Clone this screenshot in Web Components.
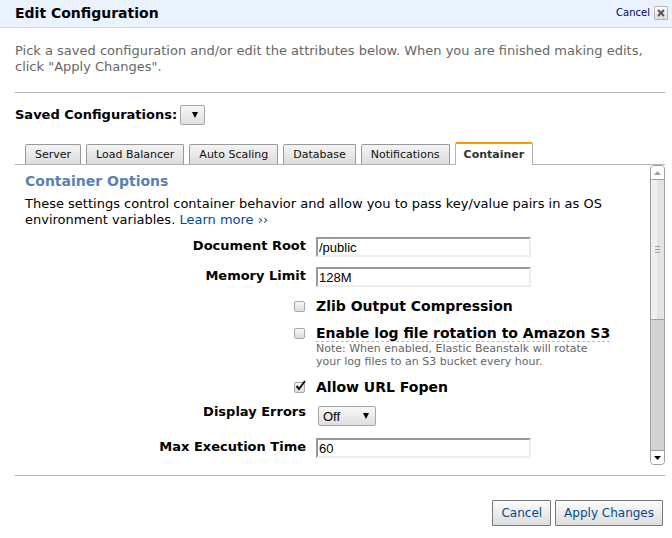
<!DOCTYPE html>
<html lang="en">
<head>
<meta charset="utf-8">
<title>Edit Configuration</title>
<style>
  body { margin: 0; background: #fff; color: #000; font: 13px/16px "DejaVu Sans", sans-serif; }
</style>
</head>
<body>
<config-dialog heading="Edit Configuration">
  <p slot="intro">Pick a saved configuration and/or edit the attributes below. When you are finished making edits, click "Apply Changes".</p>
  <saved-select slot="saved"></saved-select>
  <tab-bar slot="tabs" tabs="Server|Load Balancer|Auto Scaling|Database|Notifications|Container" active="Container"></tab-bar>
  <scroll-pane slot="pane">
    <options-intro></options-intro>
    <text-field label="Document Root" value="/public"></text-field>
    <text-field label="Memory Limit" value="128M"></text-field>
    <check-field label="Zlib Output Compression"></check-field>
    <check-field label="Enable log file rotation to Amazon S3" hint>Note: When enabled, Elastic Beanstalk will rotate your log files to an S3 bucket every hour.</check-field>
    <check-field label="Allow URL Fopen" checked></check-field>
    <select-field label="Display Errors" value="Off"></select-field>
    <text-field label="Max Execution Time" value="60"></text-field>
  </scroll-pane>
  <action-button slot="actions">Cancel</action-button>
  <action-button slot="actions">Apply Changes</action-button>
</config-dialog>

<script>
const define = (name, render) => customElements.define(name, class extends HTMLElement {
  connectedCallback() {
    if (this.shadowRoot) return;
    this.attachShadow({ mode: "open" }).innerHTML = render(this);
  }
});

const row = `
  :host { display: grid; grid-template-columns: 281px 1fr; column-gap: 10px; }
  .name { text-align: right; font-weight: bold; padding-top: 1px; }
  * { box-sizing: border-box; }`;

const select = `
  .pick { position: relative; display: block; width: fit-content; }
  select { appearance: none; display: block; height: 20px; margin: 0; padding: 0 4px; border: 1px solid #a6a6a6;
    border-radius: 2px; background: linear-gradient(#f8f8f8, #dedede); color: #000;
    font: 13px "Liberation Sans", sans-serif; }
  .pick svg { position: absolute; right: 7px; top: 7px; pointer-events: none; }`;
const arrow = `<svg width="6" height="6"><path d="M0 0h6L3 6z"/></svg>`;

define("config-dialog", el => `
  <style>
    :host { display: block; }
    header { display: flex; justify-content: space-between; align-items: center; height: 28px; box-sizing: border-box;
      padding: 0 4px 2px 15px; background: #eaf2fe; border-bottom: 1px solid #c9dcea; }
    h1 { margin: 0; font-size: 14px; line-height: 16px; }
    .close { display: flex; align-items: center; gap: 4px; }
    .close a { font-size: 10px; line-height: 14px; color: #000066; text-decoration: none; }
    .close button { display: flex; align-items: center; justify-content: center; width: 14px; height: 14px; padding: 0;
      border: 1px solid #b4b4b4; border-radius: 1px; background: linear-gradient(#fff, #ddd); }
    main { padding: 15px 7px 0 15px; }
    ::slotted(p) { margin: 0; color: #666; }
    .saved { margin-top: 17px; padding-top: 12px; border-top: 1px solid #b3b3b3; }
    .tabs { margin-top: 17px; }
    footer { display: flex; justify-content: flex-end; gap: 4px; margin-top: 10px; padding: 24px 2px 12px 0;
      border-top: 1px solid #b3b3b3; }
  </style>
  <header>
    <h1>${el.getAttribute("heading")}</h1>
    <div class="close"><a href="#">Cancel</a><button aria-label="Close"><svg width="8" height="8"><path d="M1 1l6 6M7 1L1 7" stroke="#555" stroke-width="2"/></svg></button></div>
  </header>
  <main>
    <slot name="intro"></slot>
    <div class="saved"><slot name="saved"></slot></div>
    <div class="tabs"><slot name="tabs"></slot></div>
    <slot name="pane"></slot>
    <footer><slot name="actions"></slot></footer>
  </main>`);

define("saved-select", () => `
  <style>
    :host { display: flex; align-items: center; gap: 3px; }
    label { font-weight: bold; }
    ${select}
    select { width: 25px; }
  </style>
  <label for="s">Saved Configurations:</label>
  <span class="pick"><select id="s"></select>${arrow}</span>`);

define("tab-bar", el => `
  <style>
    :host { display: flex; align-items: flex-end; gap: 5px; padding: 0 10px; border-bottom: 1px solid #b3b3b3; }
    button { box-sizing: border-box; height: 20px; margin: 0; padding: 0 9px; border: 1px solid #999; border-bottom: 0;
      border-radius: 2px 2px 0 0; background: linear-gradient(#f4f4f4, #dcdcdc); color: #111;
      font: 11px/14px "DejaVu Sans", sans-serif; white-space: nowrap; }
    .on { height: 23px; margin-bottom: -1px; padding: 0 8px; border-color: #b3b3b3; border-top: 2px solid #f90; background: #fff;
      color: #333; font-weight: bold; }
  </style>
  ${el.getAttribute("tabs").split("|").map(t =>
    `<button${t === el.getAttribute("active") ? ' class="on"' : ""}>${t}</button>`).join("")}`);

define("scroll-pane", () => `
  <style>
    :host { display: grid; grid-template-columns: 1fr 15px; }
    .body { padding: 8px 10px 7px; }
    ::slotted(:last-child) { margin-bottom: 0 !important; }
    .bar { display: flex; flex-direction: column; box-sizing: border-box; border: 1px solid #a0a0a0; border-radius: 4px; background: #d2d2d2; overflow: hidden; }
    button { display: flex; align-items: center; justify-content: center; height: 14px; padding: 0; border: 0; background: #fff; }
    .up { border-bottom: 1px solid #a0a0a0; }
    .down { border-top: 1px solid #a0a0a0; }
    .track { flex: 1; }
    .thumb { display: flex; align-items: center; justify-content: center; box-sizing: border-box; height: 52%;
      border-bottom: 1px solid #a0a0a0; background: linear-gradient(90deg, #efefef 50%, #e3e3e3 50%); }
    svg { display: block; }
  </style>
  <div class="body"><slot></slot></div>
  <div class="bar">
    <button class="up" aria-label="Scroll up"><svg width="7" height="4"><path d="M3.500 0L7 4H0z" fill="#a0a0a0"/></svg></button>
    <div class="track"><div class="thumb"><svg width="5" height="7" shape-rendering="crispEdges"><path d="M0 .5h5M0 3.500h5M0 6.500h5" stroke="#a0a0a0"/></svg></div></div>
    <button class="down" aria-label="Scroll down"><svg width="7" height="4"><path d="M0 0h7L3.500 4z"/></svg></button>
  </div>`);

define("options-intro", () => `
  <style>
    :host { display: block; margin-bottom: 9px; }
    h2 { margin: 0 0 7px; font-size: 14px; line-height: 16px; color: #5a7fb2; }
    p { margin: 0; }
    a { color: #004b91; text-decoration: none; }
  </style>
  <h2>Container Options</h2>
  <p>These settings control container behavior and allow you to pass key/value pairs in as OS environment variables. <a href="#">Learn more ››</a></p>`);

define("text-field", el => `
  <style>
    ${row}
    :host { margin-bottom: 10px; }
    input { display: block; width: 215px; height: 20px; margin: 0; padding: 1px; border: 2px solid; border-color: #999 #eee #eee #999;
      background: #fff; color: #000; font: 13px "Liberation Sans", sans-serif; }
  </style>
  <label class="name" for="c">${el.getAttribute("label")}</label>
  <input id="c" value="${el.getAttribute("value")}">`);

define("check-field", el => `
  <style>
    ${row}
    :host { padding-top: 1px; margin-bottom: 10px; }
    .box { position: relative; justify-self: end; width: 11px; height: 11px; margin: 3px 1px 0 0; }
    input { appearance: none; display: block; width: 11px; height: 11px; margin: 0; border: 1px solid #a8a8a8; border-radius: 2px;
      background: linear-gradient(#f6f6f6, #dcdcdc); }
    svg { position: absolute; left: 1px; top: -2px; pointer-events: none; }
    .text { display: block; width: fit-content; font-size: 14px; line-height: 16px; font-weight: bold; }
    .hint { border-bottom: 1px dashed #bbb; }
    .note { max-width: 290px; font-size: 11px; line-height: 13px; color: #666; }
  </style>
  <div class="box"><input type="checkbox" id="c"${el.hasAttribute("checked") ? " checked" : ""}>${el.hasAttribute("checked")
    ? `<svg width="11" height="11"><path d="M1.500 6L4 9L10 1" fill="none" stroke="#111" stroke-width="2"/></svg>` : ""}</div>
  <div><label for="c" class="text${el.hasAttribute("hint") ? " hint" : ""}">${el.getAttribute("label")}</label>
    <div class="note"><slot></slot></div></div>`);

define("select-field", el => `
  <style>
    ${row}
    :host { margin: 11px 0 12px; }
    .name { padding: 0; line-height: 12px; }
    ${select}
    .pick { margin-left: 2px; }
    select { width: 58px; }
  </style>
  <label class="name" for="c">${el.getAttribute("label")}</label>
  <span class="pick"><select id="c"><option>${el.getAttribute("value")}</option></select>${arrow}</span>`);

define("action-button", () => `
  <style>
    button { height: 26px; padding: 0 8px; border: 1px solid #777; border-radius: 1px;
      background: linear-gradient(#fcfcfc, #ddd); color: #004b91; font: 12px "DejaVu Sans", sans-serif; }
    :host, button { display: block; }
  </style>
  <button><slot></slot></button>`);
</script>
</body>
</html>
